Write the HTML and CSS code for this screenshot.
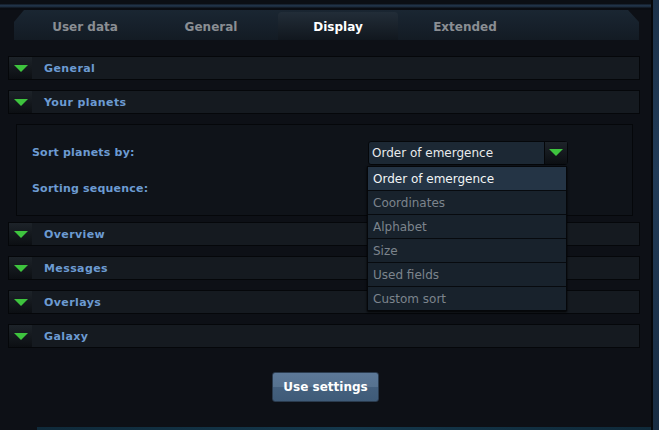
FILE: index.html
```html
<!DOCTYPE html>
<html><head><meta http-equiv="Content-Type" content="text/html; charset=UTF-8">
	<meta name="viewport" content="width=device-width, initial-scale=1">
	<title>Settings</title>
	<link rel="stylesheet" href="styles.css">
</head>
<body>
<div class="main">
	<div class="topbar"></div>
	<div class="tabs">
		<div class="tab">User data</div>
		<div class="tab">General</div>
		<div class="tab active">Display</div>
		<div class="tab">Extended</div>
	</div>

	<div class="sections">
		<div class="head"><span class="toggle"><span class="tri"></span></span><span class="title">General</span></div>
		<div class="head"><span class="toggle"><span class="tri"></span></span><span class="title">Your planets</span></div>
		<div class="panel">
			<div class="row">
				<label>Sort planets by:</label>
				<div class="select">
					<span class="value">Order of emergence</span>
					<span class="arrow"><span class="tri"></span></span>
					<ul class="list">
						<li class="current">Order of emergence</li>
						<li>Coordinates</li>
						<li>Alphabet</li>
						<li>Size</li>
						<li>Used fields</li>
						<li>Custom sort</li>
					</ul>
				</div>
			</div>
			<div class="row">
				<label>Sorting sequence:</label>
			</div>
		</div>
		<div class="head near"><span class="toggle"><span class="tri"></span></span><span class="title">Overview</span></div>
		<div class="head"><span class="toggle"><span class="tri"></span></span><span class="title">Messages</span></div>
		<div class="head"><span class="toggle"><span class="tri"></span></span><span class="title">Overlays</span></div>
		<div class="head"><span class="toggle"><span class="tri"></span></span><span class="title">Galaxy</span></div>
	</div>

	<div class="actions">
		<button type="button" class="btn">Use settings</button>
	</div>
	<div class="bottomline"></div>
</div>
<div class="side"></div>
</body></html>
```

FILE: styles.css
```css
body{
	margin: 0;
	width: 659px;
	height: 430px;
	overflow: hidden;
	display: flex;
	background-color: #0c0f14;
	font-family: "DejaVu Sans", Verdana, sans-serif;
}
.main{
	width: 651px;
	height: 430px;
	border-right: 2px solid #05070a;
	background-color: #0d1016;
	position: relative;
}
.side{
	flex: 1;
	background: linear-gradient(#1c324a, #213b57 40%, #182c42);
}
.topbar{
	height: 10px;
	background: linear-gradient(#0b0f14 0px, #0b0f14 4px, #22364c 5px, #1b2a3a 7px, #0a0d12 8px);
}
.tabs{
	height: 30px;
	margin: 0 12px 0 14px;
	display: flex;
	align-items: flex-end;
	background: linear-gradient(#1a2632, #131b24);
	clip-path: polygon(10px 0, 614px 0, 625px 12px, 625px 30px, 0 30px, 0 12px);
	border-bottom: 1px solid #070a0e;
}
.tab{
	height: 28px;
	line-height: 30px;
	width: 126px;
	text-align: center;
	font-size: 12px;
	font-weight: bold;
	color: #8a8e93;
}
.tab:first-child{
	margin-left: 8px;
}
.tab.active{
	width: 120px;
	margin: 0 4px;
	color: #ffffff;
	border-radius: 4px 4px 0 0;
	background: linear-gradient(#222d38, #11171e);
}
.sections{
	margin: 15px 11px 0 8px;
	display: flex;
	flex-direction: column;
	gap: 10px;
}
.head{
	height: 22px;
	border: 1px solid #05070a;
	background-color: #151a20;
	display: flex;
	align-items: center;
}
.head.near{
	margin-top: -4px;
}
.toggle{
	width: 23px;
	height: 22px;
	background: linear-gradient(#1d2329, #0c0f13);
	display: flex;
	align-items: center;
	justify-content: center;
}
.tri{
	width: 0;
	height: 0;
	border-left: 7px solid transparent;
	border-right: 7px solid transparent;
	border-top: 7px solid #3ec43e;
}
.title{
	margin-left: 12px;
	font-size: 11px;
	font-weight: bold;
	letter-spacing: 0.4px;
	color: #6c9bd2;
}
.panel{
	margin: 0 7px 0 8px;
	border: 1px solid #05070a;
	background-color: #0f1319;
	padding: 16px 0 0 15px;
	box-sizing: border-box;
	height: 92px;
}
.row{
	display: flex;
	align-items: center;
	height: 23px;
}
.row + .row{
	margin-top: 13px;
}
label{
	width: 336px;
	font-size: 11px;
	font-weight: bold;
	letter-spacing: 0.2px;
	color: #6c9bd2;
}
.select{
	position: relative;
	width: 198px;
	height: 22px;
	border: 1px solid #05070a;
	border-radius: 3px;
	background-color: #1c2834;
	display: flex;
	align-items: center;
}
.value{
	flex: 1;
	padding-left: 3px;
	font-size: 12px;
	color: #e8eaec;
}
.arrow{
	width: 22px;
	height: 22px;
	border-left: 1px solid #05070a;
	background: linear-gradient(#1d2329, #0c0f13);
	display: flex;
	align-items: center;
	justify-content: center;
}
.list{
	position: absolute;
	top: 24px;
	left: -2px;
	width: 198px;
	margin: 0;
	padding: 0;
	list-style: none;
	border: 1px solid #05070a;
	background-color: #18222c;
	box-shadow: 0 1px 2px #000;
}
.list li{
	height: 23px;
	line-height: 25px;
	padding-left: 5px;
	font-size: 12px;
	color: #7c848c;
	border-bottom: 1px solid #070a0e;
}
.list li:last-child{
	border-bottom: none;
}
.list li.current{
	background-color: #243445;
	color: #f2f4f6;
}
.actions{
	margin-top: 24px;
	display: flex;
	justify-content: center;
}
.btn{
	width: 107px;
	height: 30px;
	border: 1px solid #2a3b4e;
	border-radius: 3px;
	background: linear-gradient(#5c7898 0%, #56728f 50%, #44607e 51%, #3f5b78 100%);
	color: #ffffff;
	font-family: "DejaVu Sans", Verdana, sans-serif;
	font-size: 12px;
	font-weight: bold;
}
.bottomline{
	position: absolute;
	left: 37px;
	right: 0;
	bottom: 0;
	height: 3px;
	background: linear-gradient(90deg, #0f2a3a, #14384c 50%, #0f2a3a);
}
```
